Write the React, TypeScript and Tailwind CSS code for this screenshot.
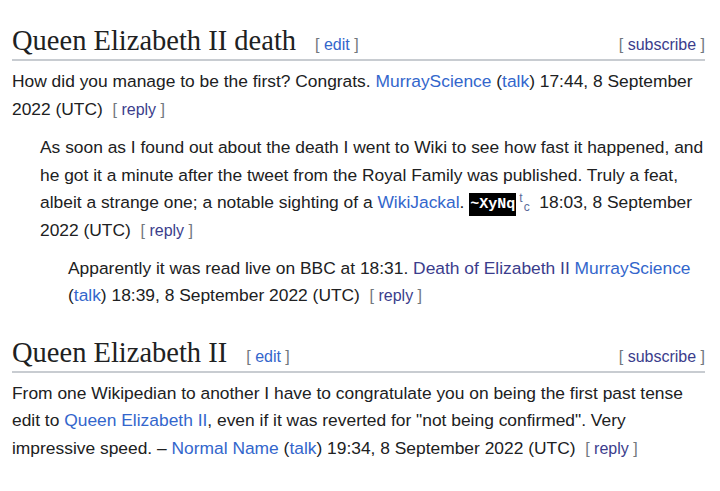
const blue = "text-[#3366cc]";
const visited = "text-[#3b3d8c]";

function Bracket({ label, cls }: { label: string; cls: string }) {
  return (
    <span className="text-[#72777d] text-[16px] leading-none">
      [ <span className={cls}>{label}</span> ]
    </span>
  );
}

function Heading({ title }: { title: string }) {
  return (
    <div className="flex items-baseline justify-between border-b-2 border-[#c8ccd1]">
      <div className="flex items-baseline">
        <h2 className="text-[28.5px] leading-[36px] text-[#202122] font-['Liberation_Serif',serif]">{title}</h2>
        <span className="ml-[19px]">
          <Bracket label="edit" cls={blue} />
        </span>
      </div>
      <Bracket label="subscribe" cls={visited} />
    </div>
  );
}

export default function App() {
  return (
    <div className="w-[720px] h-[491px] bg-white overflow-hidden font-['Liberation_Sans',Arial,sans-serif] text-[#202122] text-[17.4px] leading-[27.6px] pl-[12px] pr-[15px] pt-[23px]">
      <Heading title="Queen Elizabeth II death" />
      <p className="mt-[7px]">
        How did you manage to be the first? Congrats. <span className={blue}>MurrayScience</span> (<span className={blue}>talk</span>) 17:44, 8 September 2022 (UTC)&nbsp; <Bracket label="reply" cls={visited} />
      </p>
      <p className="pl-[28px] mt-[11px]">
        As soon as I found out about the death I went to Wiki to see how fast it happened, and he got it a minute after the tweet from the Royal Family was published. Truly a feat, albeit a strange one; a notable sighting of a <span className={blue}>WikiJackal</span>.{" "}
        <span className="bg-black text-white font-['Liberation_Mono',monospace] font-bold text-[15px] leading-none px-[1px] py-[3px]">~XyNq</span>
        <sup className="ml-[3px] text-[#5a6a9a] text-[12px] leading-none">t</sup>
        <sub className="ml-[1px] text-[#5a6a9a] text-[12px] leading-none">c</sub>&nbsp; 18:03, 8 September 2022 (UTC)&nbsp; <Bracket label="reply" cls={visited} />
      </p>
      <p className="pl-[56px] mt-[10px]">
        Apparently it was read live on BBC at 18:31. <span className={visited}>Death of Elizabeth II</span> <span className={blue}>MurrayScience</span> (<span className={blue}>talk</span>) 18:39, 8 September 2022 (UTC)&nbsp; <Bracket label="reply" cls={visited} />
      </p>
      <div className="mt-[25px]">
        <Heading title="Queen Elizabeth II" />
      </div>
      <p className="mt-[7px]">
        From one Wikipedian to another I have to congratulate you on being the first past tense edit to <span className={blue}>Queen Elizabeth II</span>, even if it was reverted for "not being confirmed". Very impressive speed. – <span className={blue}>Normal Name</span> (<span className={blue}>talk</span>) 19:34, 8 September 2022 (UTC)&nbsp; <Bracket label="reply" cls={visited} />
      </p>
    </div>
  );
}
